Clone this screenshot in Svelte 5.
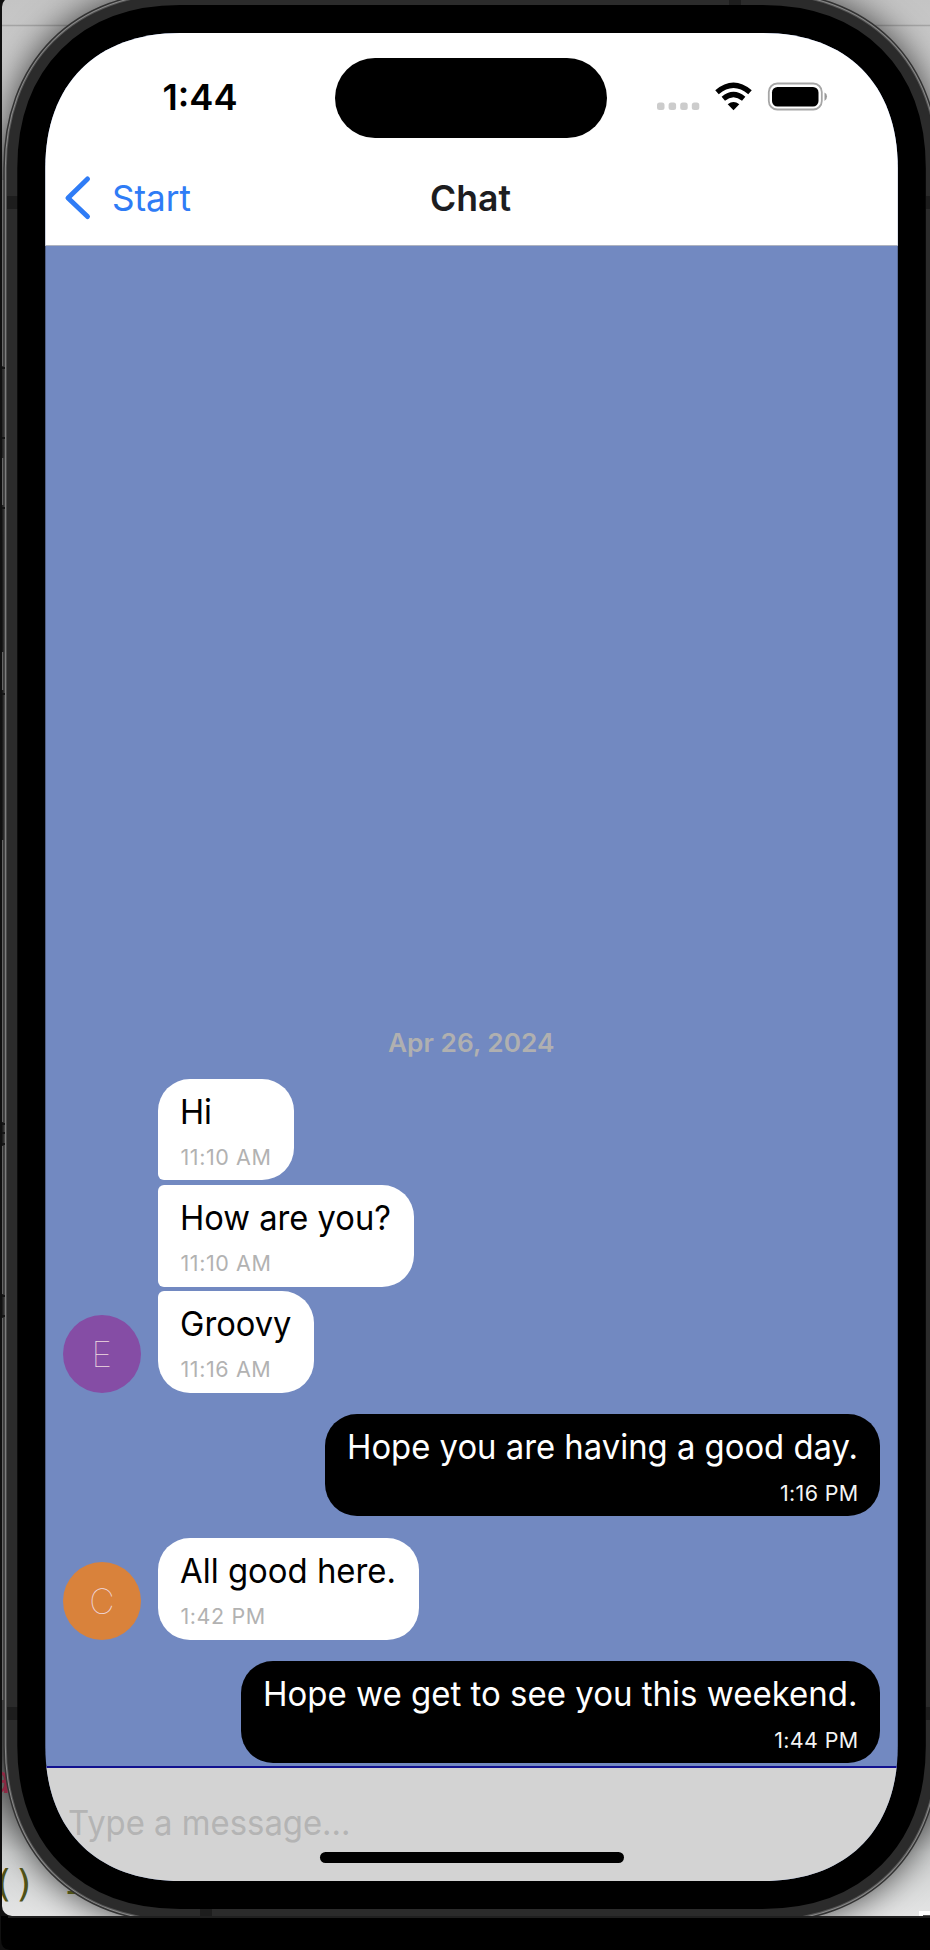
<script>
  const outline =
    'M180 33 H762.5 C847 33 897.8 84 897.8 168 V1746 C897.8 1830 847 1881 762.5 1881 H180 C96 1881 45.3 1830 45.3 1746 V168 C45.3 84 96 33 180 33 Z';

  const messages = [
    { text: 'Hi', time: '11:10 AM', w: 136, pos: 'first' },
    { text: 'How are you?', time: '11:10 AM', w: 256, pos: 'middle' },
    { text: 'Groovy', time: '11:16 AM', w: 156.5, pos: 'last', avatar: 'E', color: '#854da5' },
    { text: 'Hope you are having a good day.', time: '1:16 PM', w: 555, mine: true },
    { text: 'All good here.', time: '1:42 PM', w: 261, pos: 'single', avatar: 'C', color: '#d9823b' },
    { text: 'Hope we get to see you this weekend.', time: '1:44 PM', w: 638.5, mine: true }
  ];
  const textWidths = [32, 211, 111.5, 511, 216, 594.5];
</script>

<div class="desktop">
  <svg class="frame" width="930" height="1950" viewBox="0 0 930 1950">
    <defs>
      <linearGradient id="wall" x1="0" y1="0" x2="0" y2="1">
        <stop offset="0" stop-color="#c4c4c4" />
        <stop offset="0.06" stop-color="#d0d0d0" />
        <stop offset="0.12" stop-color="#555" />
        <stop offset="0.3" stop-color="#282828" />
        <stop offset="0.68" stop-color="#303030" />
        <stop offset="0.9" stop-color="#666" />
        <stop offset="0.95" stop-color="#d0d2d2" />
        <stop offset="1" stop-color="#eee" />
      </linearGradient>
      <filter id="soft" x="-20%" y="-20%" width="140%" height="140%"><feGaussianBlur stdDeviation="17" /></filter>
      <clipPath id="window"><rect x="2" y="-3" width="940" height="1919" rx="10" /></clipPath>
    </defs>
    <rect width="930" height="1950" fill="#101010" />
    <g clip-path="url(#window)">
      <rect width="930" height="1950" fill="url(#wall)" />
      <path d="M0 25.5H930" stroke="#a5a5a5" stroke-width="1.5" />
      <path d={outline} fill="none" stroke="#000" stroke-opacity=".65" stroke-width="86" filter="url(#soft)" />
      <text x="-12" y="1793" class="code" fill="#8d2842">a</text>
      <text x="-8" y="1896" class="code" fill="#4f5216">(</text>
      <text x="13" y="1896" class="code" fill="#4f5216">)</text>
      <text x="61" y="1903" class="code" fill="#4f5216">-</text>
      <path d="M919 1917V1911H930V1917Z" fill="#fff" />
      <path d="M923 1917V1915H930V1917Z" fill="#555" />
      <path d={outline} fill="none" stroke="#333" stroke-width="84" />
      <path d={outline} fill="none" stroke="#8a8a8a" stroke-width="81" />
      <path d={outline} fill="none" stroke="#555" stroke-width="79" />
      <path d={outline} fill="none" stroke="#2b2b2b" stroke-width="77" />
      <path d="M2.7 180V366M2.7 458V505M2.7 652V690M2.7 840V1122M2.7 1146V1294M2.7 1318V1700" fill="none" stroke="#777" stroke-width="1" />
      <path d="M2 368H5M2 438H5M2 508H5M2 694H5M2 1124H5M2 1133H5M2 1144H5M2 1296H5M2 1316H5" fill="none" stroke="#151515" stroke-width="2" />
      <path d="M7 196H18V209H7ZM926 196H930V209H926ZM7 1707H18V1720H7ZM926 1707H930V1720H926ZM729 0H741V5H729ZM200 1909H212V1916H200Z" fill="#1d1d1d" />
    </g>
    <path d={outline} fill="#000" stroke="#000" stroke-width="56" />
    <path d="M1 1916H930V1950H10Q1 1950 1 1939Z" fill="#000" />
    <path d="M8 1917H930" stroke="#2b2b2b" stroke-width="1.6" />
  </svg>

  <main class="screen">
    <header>
      <div class="status">
        <span class="clock"><svg width="76" height="34"><text x="-0.5" y="28" textLength="75" lengthAdjust="spacingAndGlyphs">1:44</text></svg></span>
        <span class="island"></span>
        <svg class="indicators" width="172" height="32" viewBox="0 0 172 32">
          <g fill="#ccc">
            <rect x="1" y="20.5" width="7.5" height="7.5" rx="2.5" /><rect x="12.6" y="20.5" width="7.5" height="7.5" rx="2.5" /><rect x="24.2" y="20.5" width="7.5" height="7.5" rx="2.5" /><rect x="35.8" y="20.5" width="7.5" height="7.5" rx="2.5" />
          </g>
          <path d="M61 10.2Q77.5 -3.8 94 10.2" fill="none" stroke="#000" stroke-width="5.4" />
          <path d="M67.3 16.8Q77.5 8.1 87.7 16.8" fill="none" stroke="#000" stroke-width="5.2" />
          <path d="M71.7 22.3Q77.5 17.5 83.3 22.3L77.5 28.2Z" />
          <rect x="112.8" y="1.5" width="53" height="26" rx="8.5" fill="none" stroke="#a6a6a6" stroke-width="1.8" />
          <rect x="116" y="5" width="46.5" height="19.5" rx="5.5" />
          <path d="M168.5 10.5Q171 11.5 171 14.6T168.5 19Z" fill="#999" />
        </svg>
      </div>
      <nav>
        <a class="back" href="#start">
          <svg width="28" height="44" viewBox="0 0 28 44"><path d="M24.5 3L5 22L24.5 40.5" fill="none" stroke="#2f7cf6" stroke-width="5" stroke-linecap="round" stroke-linejoin="round" /></svg>
          <svg class="label" width="82" height="44"><text x="1" y="35.5" textLength="79" lengthAdjust="spacingAndGlyphs">Start</text></svg>
        </a>
        <svg class="title" width="84" height="44"><text x="1" y="35.5" textLength="81" lengthAdjust="spacingAndGlyphs">Chat</text></svg>
      </nav>
    </header>

    <section class="thread">
      <svg class="day" width="170" height="30"><text x="1" y="21.5" textLength="166.5" lengthAdjust="spacingAndGlyphs">Apr 26, 2024</text></svg>
      {#each messages as m, i}
        <div class="row {m.mine ? 'mine' : m.pos}">
          {#if !m.mine}
            <span class="avatar" style:background={m.color ?? 'transparent'}>{m.avatar ?? ''}</span>
          {/if}
          <div class="bubble" style:width="{m.w}px">
            <svg width={textWidths[i]} height="46"><text x="0" y="41.2" textLength={textWidths[i]} lengthAdjust="spacingAndGlyphs">{m.text}</text></svg>
            <time>{m.time}</time>
          </div>
        </div>
      {/each}
    </section>

    <footer>
      <svg width="290" height="48"><text x="0" y="37" textLength="282.5" lengthAdjust="spacingAndGlyphs">Type a message...</text></svg>
      <span class="home"></span>
    </footer>
  </main>
</div>

<style>
  :global(body) { margin: 0; background: #000; }
  .desktop { width: 930px; height: 1950px; position: relative; overflow: hidden; box-sizing: border-box; padding: 33px 0 0 45.3px; font-family: Inter, "Liberation Sans", sans-serif; }
  .frame { position: absolute; left: 0; top: 0; }
  .code { font: 38px "DejaVu Sans Mono", monospace; }
  .screen { position: relative; width: 852.5px; height: 1848px; display: flex; flex-direction: column; background: #7289c1; clip-path: path('M135 0H717.5C801.5 0 852.5 51 852.5 135V1713C852.5 1797 801.5 1848 717.5 1848H135C51 1848 0 1797 0 1713V135C0 51 51 0 135 0Z'); }
  svg { display: block; flex: none; overflow: visible; }
  header { height: 212.5px; box-sizing: border-box; background: #fff; border-bottom: 1px solid #aeb3c0; }
  .status { height: 104px; display: flex; align-items: flex-start; }
  .clock { margin: 49px 0 0 118px; width: 76px; font-size: 36px; font-weight: 600; }
  .island { width: 272px; height: 80px; border-radius: 40px; background: #000; margin: 24.5px 0 0 96px; }
  .indicators { margin: 48.5px 0 0 48.5px; }
  nav { height: 106px; display: grid; grid-template-columns: 384px 84px 1fr; padding-top: 38px; box-sizing: border-box; }
  .back { display: flex; gap: 20px; padding-left: 17.5px; margin-top: 1px; text-decoration: none; }
  .label { margin-top: -1px; fill: #2f7cf6; font-size: 36px; }
  .title { fill: #1d1d1f; font-size: 36px; font-weight: 600; }
  .thread { flex: 1; box-sizing: border-box; padding: 0 17.5px 2.2px; display: flex; flex-direction: column; justify-content: flex-end; }
  .day { align-self: center; margin-bottom: 19px; fill: #b0b0b0; font-size: 25px; font-weight: 600; }
  .row { display: flex; align-items: flex-end; margin-bottom: 21.7px; }
  .row.first, .row.middle { margin-bottom: 4.2px; }
  .row.mine { justify-content: flex-end; padding-right: 0.7px; }
  .row:last-child { margin-bottom: 0; }
  .avatar { width: 78px; height: 78px; margin-right: 17px; border-radius: 50%; display: flex; align-items: center; justify-content: center; color: #f0dbe0; font-size: 35px; font-weight: 100; flex: none; }
  .bubble { height: 101.9px; box-sizing: border-box; padding: 4px 21px 0 22.7px; border-radius: 32px; background: #fff; display: flex; flex-direction: column; align-items: flex-start; font-size: 34px; }
  .first .bubble { border-bottom-left-radius: 6px; }
  .middle .bubble { border-top-left-radius: 6px; border-bottom-left-radius: 6px; }
  .last .bubble { border-top-left-radius: 6px; }
  .mine .bubble { background: #000; fill: #fff; align-items: flex-end; padding-right: 21.7px; }
  time { font-size: 21.5px; line-height: 28px; margin-top: 14.5px; color: #b2b2b2; white-space: nowrap; letter-spacing: 0.6px; }
  .mine time { color: #f4f4f4; letter-spacing: 0.35px; margin-right: -0.7px; }
  footer { height: 115.5px; box-sizing: border-box; flex: none; background: #d3d3d3; border-top: 2px solid #11118f; padding: 30px 0 0 23px; fill: #b4b4b4; font-size: 34px; }
  .home { display: block; width: 304px; height: 11px; border-radius: 6px; background: #000; margin: 6.5px 0 0 251.5px; }
</style>
